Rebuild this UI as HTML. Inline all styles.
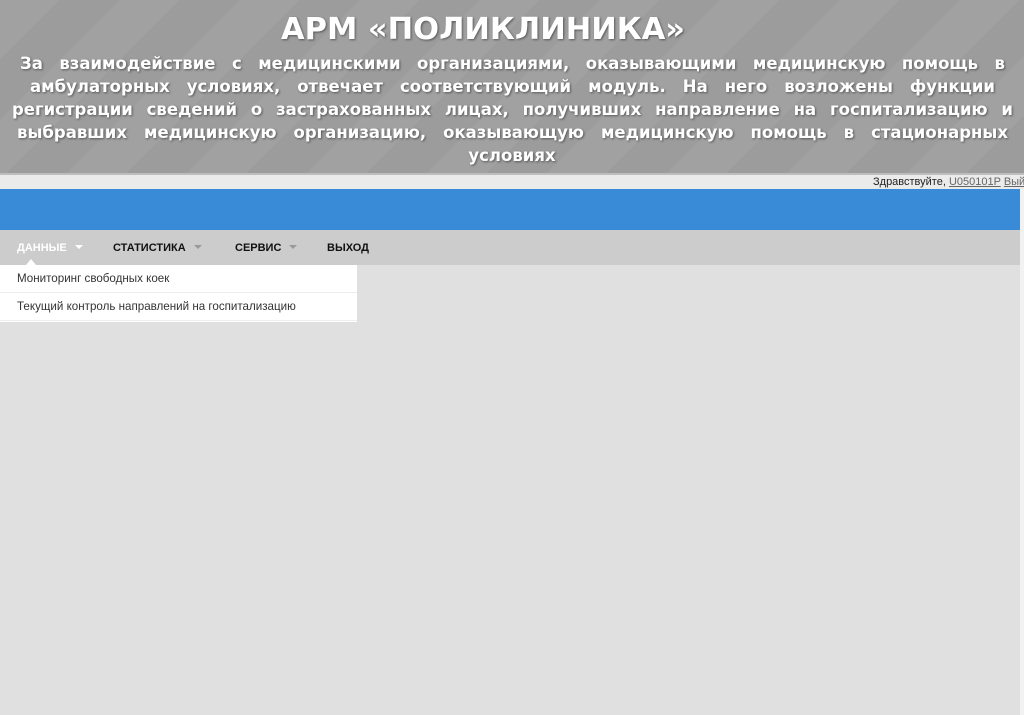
<!DOCTYPE html>
<html><head><meta charset="utf-8"><style>
*{margin:0;padding:0;box-sizing:border-box}
body{width:1024px;height:715px;overflow:hidden;background:#e0e0e0;font-family:"Liberation Sans",Arial,sans-serif;position:relative}
#hdr{position:absolute;left:0;top:0;width:1024px;height:173px;background:#9c9c9c;background-image:linear-gradient(135deg,rgba(255,255,255,.05) 25%,transparent 25%,transparent 50%,rgba(255,255,255,.05) 50%,rgba(255,255,255,.05) 75%,transparent 75%);background-size:120px 120px;color:#fff;text-shadow:1px 1px 2px rgba(0,0,0,.45);font-weight:bold;font-family:"DejaVu Sans",sans-serif}
#hdr h1{position:absolute;top:11px;left:0;width:966px;text-align:center;font-size:30.5px;line-height:38px}
.l{position:absolute;font-size:16.5px;line-height:22px;white-space:nowrap;text-align:justify;text-align-last:justify}
#strip{position:absolute;top:173px;left:0;width:1024px;height:16px;background:#ebebeb;border-top:2px solid #bdbdbd;font-size:11px;line-height:14px;color:#222;overflow:hidden}
#strip span{position:absolute;left:873px;white-space:nowrap}
#strip u{color:#666}
#blue{position:absolute;top:189px;left:0;width:1020px;height:41px;background:#3a8bd7}
#nav{position:absolute;top:230px;left:0;width:1020px;height:35px;background:#cccccc;font-size:11px;font-weight:bold;color:#111}
#nav span{position:absolute;top:12px}
.ar{display:inline-block;width:0;height:0;border-left:4px solid transparent;border-right:4px solid transparent;border-top:4px solid #999;margin-left:8px;vertical-align:2px}
#dd{position:absolute;top:265px;left:0;width:357px;height:57px;background:#fff;font-size:11.6px;color:#333}
#dd div{height:28px;line-height:28px;padding-left:17px;border-bottom:1px solid #eee}
#right{position:absolute;top:189px;left:1020px;width:4px;height:526px;background:#f2f2f2}
</style></head><body>
<div id="hdr">
<h1>АРМ «ПОЛИКЛИНИКА»</h1>
<div class="l" style="top:53px;left:20px;width:985px">За взаимодействие с медицинскими организациями, оказывающими медицинскую помощь в</div>
<div class="l" style="top:76px;left:30px;width:965px">амбулаторных условиях, отвечает соответствующий модуль. На него возложены функции</div>
<div class="l" style="top:99px;left:12px;width:1001px">регистрации сведений о застрахованных лицах, получивших направление на госпитализацию и</div>
<div class="l" style="top:122px;left:17px;width:991px">выбравших медицинскую организацию, оказывающую медицинскую помощь в стационарных</div>
<div class="l" style="top:145px;left:0;width:1024px;text-align:center;text-align-last:center">условиях</div>
</div>
<div id="strip"><span>Здравствуйте, <u>U050101P</u> <u>Выйти</u></span></div>
<div id="blue"></div>
<div id="nav">
<span style="left:17px;color:#fff">ДАННЫЕ<i class="ar" style="border-top-color:#fff"></i></span>
<span style="left:113px">СТАТИСТИКА<i class="ar"></i></span>
<span style="left:235px">СЕРВИС<i class="ar"></i></span>
<span style="left:327px">ВЫХОД</span>
<i style="position:absolute;left:26px;top:29px;width:0;height:0;border-left:5px solid transparent;border-right:5px solid transparent;border-bottom:6px solid #fff"></i>
</div>
<div id="dd"><div>Мониторинг свободных коек</div><div>Текущий контроль направлений на госпитализацию</div></div>
<div id="right"></div>
</body></html>
